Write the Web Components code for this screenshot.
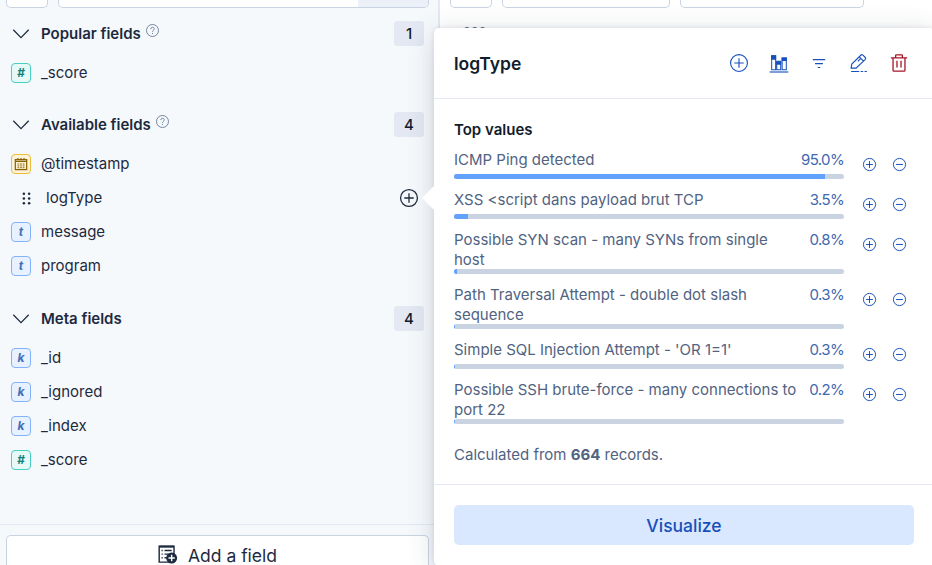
<!DOCTYPE html>
<html lang="en">
<head>
<meta charset="utf-8">
<title>Discover fields</title>
<style>
html, body { margin: 0; height: 100%; overflow: hidden; }
body { font: 400 15px/20px Inter, "Liberation Sans", sans-serif; color: #1d2a3e; background: #fff; }
</style>
</head>
<body>
<discover-page></discover-page>
<script>
const ICONS = {
  down: '<path d="M.3 3.700 8 11.700l7.700-8" stroke-width="1.250"/>',
  help: '<circle cx="8" cy="8" r="7.400"/><path d="M5.900 6.300C5.900 3.200 10.200 3.400 10.200 6c0 1.800-2.200 1.700-2.200 3.600M8 11v1.400"/>',
  plus: '<circle cx="8" cy="8" r="7.500"/><path d="M8 3.800v8.400M3.800 8h8.400"/>',
  minus: '<circle cx="8" cy="8" r="7.500"/><path d="M3.800 8h8.400"/>',
  calendar: '<path d="M1.500 3h13v11.500h-13z" stroke-width="1.400"/><path d="M1.500 5h13" stroke-width="1.500"/><path d="M4.500 1v2M8 1v2M11.500 1v2" stroke-width="1.400"/><path d="M4 8h8M4 10.200h8M4 12.300h8" stroke-dasharray="2 1" stroke-width="1.100"/>',
  grab: '<g fill="currentColor" stroke="none"><circle cx="5.200" cy="2.900" r="1.350"/><circle cx="10.800" cy="2.900" r="1.350"/><circle cx="5.200" cy="8" r="1.350"/><circle cx="10.800" cy="8" r="1.350"/><circle cx="5.200" cy="13.100" r="1.350"/><circle cx="10.800" cy="13.100" r="1.350"/></g>',
  chart: '<path d="M-.3 16h16.600" stroke-width="1"/><path d="M1.500 1.500v12.500h3.500V1.500zM6 6.500V14h3.500V6.500zM10.800 3.500V14h3.700V3.500z" stroke-width=".9"/><path d="M1 1h4.500v4H1zM5.500 6.500H10v3H5.500zM10.300 3.200H15v3h-4.700z" fill="currentColor" stroke="none"/>',
  filter: '<path d="M2.500 5h11M4.500 8.500h7M6.900 12h2.200"/>',
  pencil: '<path d="M1 12.600 1.600 9 9.800.9q.8-.6 1.700.1l2.100 2.100q.7.800 0 1.600L5.400 12.600zM8.200 2.500l3.700 3.700M9.800 3.600 7 6.500"/><path d="M1 15.500h7.200M9.500 15.500h2.200M12.900 15.500h2.100"/>',
  trash: '<path d="M.8 3.500h14.400M5 3.500V1.400Q5 .7 5.700.7h4.600q.7 0 .7.700v2.100M2.700 3.500v11q0 .8.800.8h9q.8 0 .8-.8v-11M6.200 6v6M9.800 6v6" stroke-width="1.150"/>',
  addField: '<path d="M10 14.400H1V1h12.500v6.500" stroke-width="1.200"/><path d="M1 1.400h12.500" stroke-width="1.700"/><path d="M5.500 4.700h6M5.500 7.700h4M5.500 10.800h2.500" stroke-width="1.200"/><path d="M3 4.700h1M3 7.700h1M3 10.800h1" stroke-width="1.200"/><circle cx="11.500" cy="11" r="4.600" fill="currentColor" stroke="none"/><path d="M11.500 8.300v5.400M8.800 11h5.400" stroke="#fff" stroke-width="1.200"/>'
};

const define = (name, render) => customElements.define(name, class extends HTMLElement {
  connectedCallback() {
    if (this.shadowRoot) return;
    this.attachShadow({ mode: 'open' }).innerHTML = render(this);
  }
});

define('ui-icon', el => {
  const s = el.getAttribute('size') || 16;
  return `<style>:host{display:block;flex:none;width:${s}px;height:${s}px}svg{display:block;width:100%;height:100%;overflow:visible}</style>
  <svg viewBox="0 0 16 16" fill="none" stroke="currentColor" stroke-width="${el.getAttribute('weight') || 1}">${ICONS[el.getAttribute('name')]}</svg>`;
});

define('field-token', el => {
  const t = el.getAttribute('type');
  const c = { '#': ['#e6f9f7', '#47cfc4', '#158077'], date: ['#fdf3d8', '#efbc38', '#8a6300'] }[t] || ['#e8f1ff', '#82b3fb', '#416fb8'];
  return `<style>:host{box-sizing:border-box;flex:none;display:flex;align-items:center;justify-content:center;width:20px;height:20px;border:1px solid ${c[1]};border-radius:4px;background:${c[0]};color:${c[2]};font:italic 700 12px/18px Inter,"Liberation Sans",sans-serif}</style>
  ${t === 'date' ? '<ui-icon name="calendar" size="14"></ui-icon>' : `<span>${t}</span>`}`;
});

define('field-row', el => {
  const t = el.getAttribute('type');
  return `<style>:host{display:flex;align-items:center;height:34px;padding:0 20px 0 11px}
  .name{margin-left:10px;flex:1}:host([type=grab]) .name{margin-left:12px}:host([type=grab]) .grab{margin-left:8px}</style>
  ${t === 'grab' ? '<ui-icon class="grab" name="grab" size="15"></ui-icon>' : `<field-token type="${t}"></field-token>`}
  <span class="name"><slot></slot></span>
  ${t === 'grab' ? '<ui-icon name="plus" size="18" weight="1.150"></ui-icon>' : ''}`;
});

define('field-group', el => `<style>:host{display:block}
  header{display:flex;align-items:center;height:25px;padding:0 14px 0 13px;margin-bottom:10px}
  b{font-weight:600;margin-left:12px}
  .help{color:#5a6d8c;margin:-6px 0 0 5px}
  .count{margin-left:auto;width:30px;height:25px;line-height:25px;text-align:center;border-radius:3px;background:#e3e8f2;font-weight:500;color:#111c2c}
  </style>
  <header><ui-icon name="down" size="16"></ui-icon><b>${el.getAttribute('label')}</b>
  ${el.hasAttribute('help') ? '<ui-icon class="help" name="help" size="13"></ui-icon>' : ''}
  <span class="count">${el.getAttribute('count')}</span></header><slot></slot>`);

define('field-sidebar', () => `<style>
  :host{box-sizing:border-box;display:flex;flex-direction:column;height:565px;background:#f6f9fc;border-right:2px solid #e3e8f2;overflow:hidden}
  .search{display:flex;gap:10px;height:8px;padding:0 9px 0 6px;flex:none}
  .box{box-sizing:border-box;border:1px solid #cad3e2;border-top:0;border-radius:0 0 5px 5px;background:#fff}
  .a{width:42px}.b{flex:1;display:flex;justify-content:flex-end;overflow:hidden}.b i{width:70px;background:#ecf1f9}
  .lists{flex:1;padding-top:13px}
  field-group+field-group{margin-top:22px}
  field-group:last-child{margin-top:23px}
  footer{height:41px;box-sizing:border-box;flex:none;border-top:1px solid #e3e8f2;padding:10px 9px 0 6px}
  .add{height:30px;box-sizing:border-box;border:1px solid #cad3e2;border-bottom:0;border-radius:5px 5px 0 0;background:#fff;display:flex;align-items:flex-start;justify-content:center;gap:11px;padding-top:9px;font-size:17.5px;line-height:21px}
  </style>
  <div class="search"><div class="box a"></div><div class="box b"><i></i></div></div>
  <div class="lists">
    <field-group label="Popular fields" help count="1"><field-row type="#">_score</field-row></field-group>
    <field-group label="Available fields" help count="4"><field-row type="date">@timestamp</field-row><field-row type="grab">logType</field-row><field-row type="t">message</field-row><field-row type="t">program</field-row></field-group>
    <field-group label="Meta fields" count="4"><field-row type="k">_id</field-row><field-row type="k">_ignored</field-row><field-row type="k">_index</field-row><field-row type="#">_score</field-row></field-group>
  </div>
  <footer><div class="add"><ui-icon name="addField" size="19"></ui-icon><span>Add a field</span></div></footer>`);

define('chart-area', () => `<style>
  :host{display:block;background:#fff}
  .bar{display:flex;gap:10px;padding-left:10px;height:8px}
  .bar div{box-sizing:border-box;border:1px solid #cad3e2;border-top:0;border-radius:0 0 5px 5px}
  .tick{padding:15px 0 0 23px;font-size:12.500px;line-height:20px;color:#5a6d8c}
  </style>
  <div class="bar"><div style="width:42px"></div><div style="width:168px"></div><div style="width:184px"></div></div>
  <div class="tick">800</div>`);

define('top-value', el => `<style>
  :host{display:flex;color:#516381}
  .main{width:390px}
  .text{display:flex;justify-content:space-between;min-height:25px;margin-bottom:-1px}
  .label{width:346px}
  .pct{color:#4068b0;white-space:nowrap;letter-spacing:-.65px}
  .track{height:5px;border-radius:3px;background:#cad3e2;overflow:hidden}
  .fill{height:5px;background:#61a2ff;width:${el.getAttribute('value')}%}
  .actions{display:flex;gap:17px;margin:8px 0 0 19px;color:#1750ba}
  </style>
  <div class="main"><div class="text"><span class="label"><slot></slot></span><span class="pct">${el.getAttribute('value')}%</span></div>
  <div class="track"><div class="fill"></div></div></div>
  <div class="actions"><ui-icon name="plus" size="13" weight="1.200"></ui-icon><ui-icon name="minus" size="13" weight="1.200"></ui-icon></div>`);

define('field-popover', () => `<style>
  :host{display:flex;flex-direction:column;box-sizing:border-box;background:#fff;border-radius:5px;box-shadow:0 0 5px rgba(43,57,79,.12),0 5px 28px rgba(43,57,79,.19)}
  .arrow{position:absolute;left:-12px;top:157px;width:13px;height:26px;background:#fff;clip-path:polygon(0 50%,100% 0,100% 100%)}
  header{display:flex;align-items:center;height:70px;padding:0 26px 0 20px;border-bottom:1px solid #e3e8f2;color:#1750ba;gap:22px}
  h2{margin:0 auto 0 0;padding-top:2px;font-size:17.5px;line-height:24px;font-weight:600;color:#111c2c}
  main{padding:21px 20px 0;height:364px}
  h3{margin:0 0 10px;font-size:15px;line-height:20px;font-weight:600;color:#111c2c}
  .list{display:flex;flex-direction:column;gap:11px}
  p{margin:21px 0 0;color:#516381}b{font-weight:700}
  footer{border-top:1px solid #e3e8f2;padding:20px}
  .go{height:40px;box-sizing:border-box;padding-top:2px;border-radius:5px;background:#d9e8ff;color:#1750ba;font-size:17.5px;font-weight:500;display:flex;align-items:center;justify-content:center}
  </style>
  <div class="arrow"></div>
  <header><h2>logType</h2><ui-icon name="plus" size="18"></ui-icon><ui-icon name="chart" size="18"></ui-icon><ui-icon name="filter" size="18"></ui-icon><ui-icon name="pencil" size="18"></ui-icon><ui-icon name="trash" size="18" style="color:#a71627"></ui-icon></header>
  <main><h3>Top values</h3><div class="list">
    <top-value value="95.0">ICMP Ping detected</top-value>
    <top-value value="3.5">XSS &lt;script dans payload brut TCP</top-value>
    <top-value value="0.8">Possible SYN scan - many SYNs from single host</top-value>
    <top-value value="0.3">Path Traversal Attempt - double dot slash sequence</top-value>
    <top-value value="0.3">Simple SQL Injection Attempt - 'OR 1=1'</top-value>
    <top-value value="0.2">Possible SSH brute-force - many connections to port 22</top-value>
  </div><p>Calculated from <b>664</b> records.</p></main>
  <footer><div class="go">Visualize</div></footer>`);

define('discover-page', () => `<style>
  :host{display:grid;grid-template-columns:440px 1fr;width:932px;height:565px;position:relative;overflow:hidden}
  field-popover{position:absolute;left:434px;top:28px;width:500px;height:538px}
  </style><field-sidebar></field-sidebar><chart-area></chart-area><field-popover></field-popover>`);
</script>
</body>
</html>
